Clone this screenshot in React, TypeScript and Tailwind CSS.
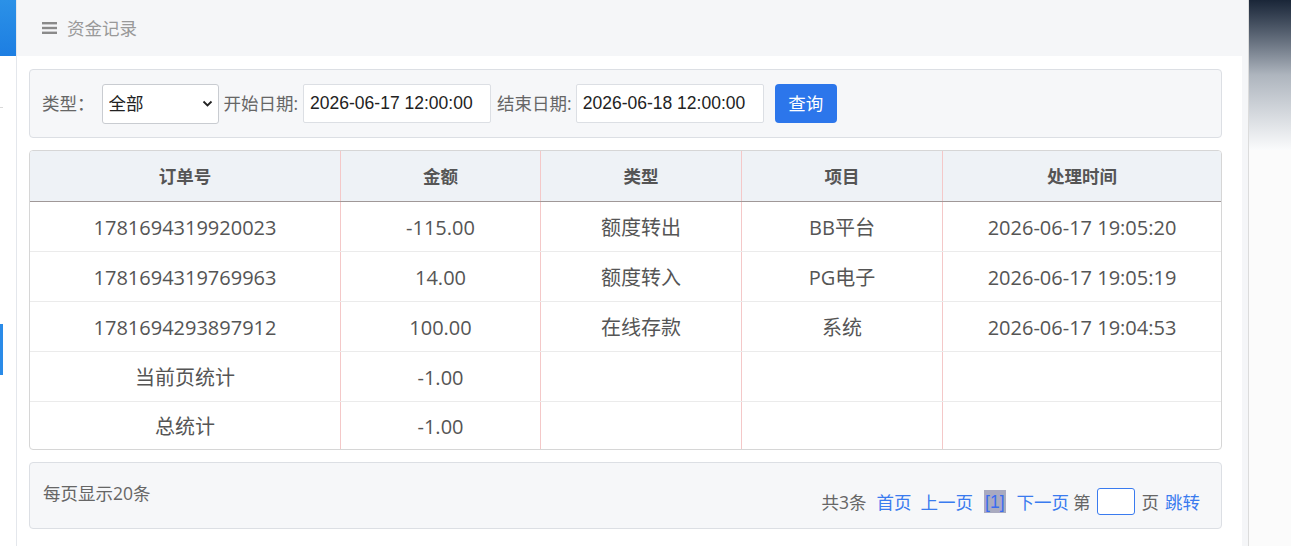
const rows = [
  ['1781694319920023', '-115.00', '额度转出', 'BB平台', '2026-06-17 19:05:20'],
  ['1781694319769963', '14.00', '额度转入', 'PG电子', '2026-06-17 19:05:19'],
  ['1781694293897912', '100.00', '在线存款', '系统', '2026-06-17 19:04:53'],
  ['当前页统计', '-1.00', '', '', ''],
  ['总统计', '-1.00', '', '', ''],
];

const heads = ['订单号', '金额', '类型', '项目', '处理时间'];

function MenuIcon() {
  return (
    <svg width="15" height="14" viewBox="0 0 15 14" className="text-[#8a8a8a]">
      <rect x="0" y="1" width="15" height="2.4" fill="currentColor" />
      <rect x="0" y="5.8" width="15" height="2.4" fill="currentColor" />
      <rect x="0" y="10.6" width="15" height="2.4" fill="currentColor" />
    </svg>
  );
}

function Sidebar() {
  return (
    <aside className="w-[17px] shrink-0 border-r border-[#e4e7ec] bg-white flex flex-col">
      <div className="h-[56px] bg-gradient-to-b from-[#2b91e7] to-[#1d7ee2]" />
      <div className="mt-[51px] h-px w-[3px] bg-[#d9d9d9]" />
      <div className="mt-[216px] h-[51px] w-[3px] bg-[#2a8be8]" />
    </aside>
  );
}

function FilterBar() {
  return (
    <div className="h-[69px] rounded-[4px] border border-[#dcdfe4] bg-[#f6f7f9] flex items-center pl-[12px] text-[17.5px] text-[#666]">
      <span>类型：</span>
      <div className="relative ml-[7px] h-[40px] w-[117px]">
        <select className="h-full w-full appearance-none rounded-[3px] border border-[#c9ccd1] bg-white pl-[6px] text-[17.5px] text-[#222] outline-none">
          <option>全部</option>
        </select>
        <svg
          className="pointer-events-none absolute right-[6px] top-[16px]"
          width="11"
          height="8"
          viewBox="0 0 11 8"
        >
          <path d="M1.5 1.5 L5.5 5.5 L9.5 1.5" fill="none" stroke="#222" strokeWidth="1.8" />
        </svg>
      </div>
      <span className="ml-[5px]">开始日期:</span>
      <input
        readOnly
        value="2026-06-17 12:00:00"
        className="ml-[5px] h-[39px] w-[188px] rounded-[2px] border border-[#dcdfe4] bg-white px-[6px] font-['Liberation_Sans',sans-serif] text-[17.5px] text-[#222] outline-none"
      />
      <span className="ml-[6px]">结束日期:</span>
      <input
        readOnly
        value="2026-06-18 12:00:00"
        className="ml-[4px] h-[39px] w-[188px] rounded-[2px] border border-[#dcdfe4] bg-white px-[6px] font-['Liberation_Sans',sans-serif] text-[17.5px] text-[#222] outline-none"
      />
      <button className="ml-[11px] h-[39px] w-[62px] rounded-[4px] bg-[#2c76eb] text-[17.5px] text-white">
        查询
      </button>
    </div>
  );
}

function RecordTable() {
  const cols = 'grid grid-cols-[310px_200px_201px_201px_1fr]';
  return (
    <div className="mt-[12px] overflow-hidden rounded-[4px] border border-[#d6d6d6] bg-white">
      <div className={`${cols} h-[51px] border-b border-[#a09898] bg-[#eef2f6]`}>
        {heads.map((h, i) => (
          <div
            key={h}
            className={`flex items-center justify-center text-[17.5px] font-bold text-[#555] ${
              i > 0 ? 'border-l border-[#f4c8c8]' : ''
            }`}
          >
            {h}
          </div>
        ))}
      </div>
      {rows.map((r, ri) => (
        <div
          key={ri}
          className={`${cols} ${ri < rows.length - 1 ? 'h-[50px] border-b border-[#ebebeb]' : 'h-[47px]'}`}
        >
          {r.map((c, i) => (
            <div
              key={i}
              className={`flex items-center justify-center pt-[2px] text-[20px] text-[#555] ${
                i > 0 ? 'border-l border-[#f4c8c8]' : ''
              }`}
            >
              {c}
            </div>
          ))}
        </div>
      ))}
    </div>
  );
}

function Pager() {
  return (
    <div className="mt-[12px] h-[67px] rounded-[4px] border border-[#dcdfe4] bg-[#f6f7f9] flex justify-between pl-[13px] pr-[21px] text-[17.5px] text-[#666]">
      <div className="mt-[18px] leading-[24px]">每页显示20条</div>
      <div className="mt-[25px] flex h-[27px] items-center leading-[24px]">
        <span>共3条</span>
        <a className="ml-[10px] text-[#3a7bef]">首页</a>
        <a className="ml-[9px] text-[#3a7bef]">上一页</a>
        <span className="ml-[11px] flex h-[23px] items-center bg-[#a9aabf] px-[1px] font-['Liberation_Sans',sans-serif] text-[#3a6cf0]">
          [1]
        </span>
        <a className="ml-[11px] text-[#3a7bef]">下一页</a>
        <span className="ml-[4px]">第</span>
        <input className="ml-[6px] h-[27px] w-[38px] rounded-[3px] border border-[#3a7bef] bg-white outline-none" />
        <span className="ml-[7px]">页</span>
        <a className="ml-[6px] text-[#3a7bef]">跳转</a>
      </div>
    </div>
  );
}

export default function App() {
  return (
    <div className="flex h-[546px] w-[1291px] overflow-hidden bg-white font-['Open_Sans','Noto_Sans_CJK_SC',sans-serif]">
      <Sidebar />
      <main className="flex w-[1231px] shrink-0 flex-col bg-[#f5f6f8]">
        <header className="flex h-[56px] shrink-0 items-center pl-[25px] text-[17.5px] text-[#999]">
          <MenuIcon />
          <span className="ml-[10px]">资金记录</span>
        </header>
        <section className="mr-[6px] flex-1 bg-white pl-[12px] pr-[20px] pt-[13px]">
          <FilterBar />
          <RecordTable />
          <Pager />
        </section>
      </main>
      <div className="flex-1 border-l border-[#dcdcdc] flex flex-col">
        <div className="h-[150px] bg-gradient-to-b from-[#1a2638] via-[#aeb5be] to-[#fafbfc]" />
        <div className="flex-1 bg-[#fbfbfb]" />
      </div>
    </div>
  );
}
